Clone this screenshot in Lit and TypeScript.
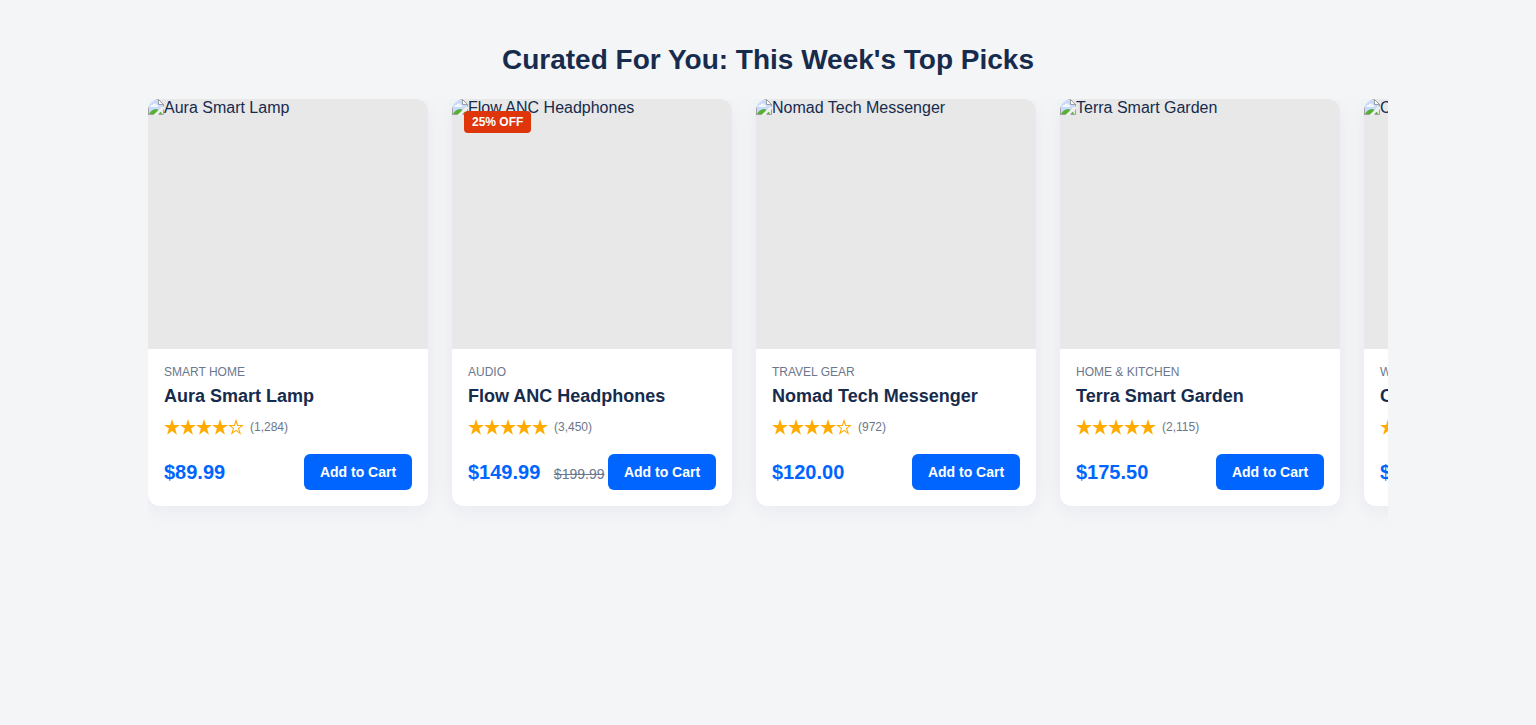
import { LitElement, html, css, svg, nothing } from "lit";
import { customElement, property } from "lit/decorators.js";

interface Product {
  name: string;
  category: string;
  stars: number;
  reviews: string;
  price: string;
  oldPrice?: string;
  badge?: string;
}

const PRODUCTS: Product[] = [
  { name: "Aura Smart Lamp", category: "Smart Home", stars: 4, reviews: "1,284", price: "$89.99" },
  { name: "Flow ANC Headphones", category: "Audio", stars: 5, reviews: "3,450", price: "$149.99", oldPrice: "$199.99", badge: "25% OFF" },
  { name: "Nomad Tech Messenger", category: "Travel Gear", stars: 4, reviews: "972", price: "$120.00" },
  { name: "Terra Smart Garden", category: "Home & Kitchen", stars: 5, reviews: "2,115", price: "$175.50" },
  { name: "Chrono Watch", category: "Wearables", stars: 4, reviews: "1,020", price: "$249.00" },
];

@customElement("product-card")
export class ProductCard extends LitElement {
  @property({ attribute: false }) product!: Product;

  static styles = css`
    :host {
      display: block;
      flex: 0 0 280px;
      height: 407px;
      box-sizing: border-box;
      border-radius: 12px;
      background: #fff;
      box-shadow: 0 4px 20px rgba(9, 30, 66, 0.055);
    }
    .media {
      position: relative;
      height: 250px;
      background: #e8e8e8;
      border-radius: 12px 12px 0 0;
      overflow: hidden;
    }
    .fallback {
      display: flex;
      align-items: flex-start;
      line-height: 18px;
      white-space: nowrap;
    }
    .broken { flex: none; width: 16px; height: 16px; }
    .badge {
      position: absolute;
      top: 12px;
      left: 12px;
      box-sizing: border-box;
      height: 22px;
      padding: 0 8px;
      border-radius: 4px;
      background: #de350b;
      color: #fff;
      font-size: 12px;
      line-height: 22px;
      font-weight: 700;
    }
    .info { padding: 16px; }
    .category {
      font-size: 12px;
      line-height: 14px;
      color: #6b778c;
      text-transform: uppercase;
      white-space: nowrap;
    }
    .name {
      margin: 5px 0 0;
      font-size: 18px;
      line-height: 25px;
      font-weight: 700;
      white-space: nowrap;
    }
    .rating {
      display: flex;
      align-items: center;
      height: 18px;
      margin-top: 9px;
    }
    .stars { display: flex; }
    .star { width: 16px; height: 16px; fill: #ffab00; }
    .hollow { fill: none; stroke: #ffab00; stroke-width: 1.05; }
    .count { margin-left: 6px; font-size: 12px; color: #6b778c; }
    .buy {
      display: flex;
      align-items: center;
      justify-content: space-between;
      height: 36px;
      margin-top: 18px;
      white-space: nowrap;
    }
    .price { font-size: 20px; font-weight: 700; color: #0065ff; }
    .old {
      margin-left: 8px;
      font-size: 14px;
      font-weight: 400;
      color: #6b778c;
      text-decoration: line-through;
    }
    .add {
      flex: none;
      width: 108px;
      height: 36px;
      padding: 0;
      border: 0;
      border-radius: 6px;
      background: #0065ff;
      color: #fff;
      font: 700 14px "Liberation Sans", Arial, sans-serif;
    }
  `;

  private star(filled: boolean) {
    return html`<svg class="star" viewBox="0 0 16 16">
      ${filled
        ? svg`<polygon points="8,0 9.9,5.9 15.9,5.9 11.1,9.6 12.9,15.7 8,12 3.1,15.7 4.9,9.6 0.1,5.9 6.1,5.9"></polygon>`
        : svg`<polygon class="hollow" points="8,1.5 9.6,6.4 14.6,6.4 10.5,9.4 12.1,14.4 8,11.4 3.9,14.4 5.5,9.4 1.4,6.4 6.4,6.4"></polygon>`}
    </svg>`;
  }

  render() {
    const p = this.product;
    return html`
      <div class="media">
        <div class="fallback">
          <svg class="broken" viewBox="0 0 16 16">
            <path d="M0 0H10.5L16 5.5V8L8 16H0Z" fill="#c8dbfa"></path>
            <path d="M2.5 8C2.3 6.4 3.6 5.6 4.8 5.9C5.3 4.1 8 4 8.5 5.9C10 5.7 10.6 7 10.2 8Z" fill="#f6f9ff"></path>
            <path d="M1 15C2.4 12 5.4 9.8 8 9.9C10.6 10 13 12 14 15Z" fill="#55b135"></path>
            <path d="M16 7V9.5L9.5 16H5.5L13 8.5Z" fill="#f0f0f0"></path>
            <path d="M0.5 16V0.5H10.5M0 15.5H6M10.5 15.5H15.5V10.5" fill="none" stroke="#a0a0a0"></path>
            <path d="M10.5 0.5V5.5H15.5Z" fill="#f8f8f8" stroke="#a0a0a0" stroke-linejoin="round"></path>
            <path d="M15.5 5V7.5" stroke="#a0a0a0"></path>
          </svg>
          <span>${p.name}</span>
        </div>
        ${p.badge ? html`<span class="badge">${p.badge}</span>` : nothing}
      </div>
      <div class="info">
        <div class="category">${p.category}</div>
        <h3 class="name">${p.name}</h3>
        <div class="rating">
          <span class="stars">${[1, 2, 3, 4, 5].map((n) => this.star(n <= p.stars))}</span>
          <span class="count">(${p.reviews})</span>
        </div>
        <div class="buy">
          <span class="price">${p.price} ${p.oldPrice ? html`<span class="old">${p.oldPrice}</span>` : nothing}</span>
          <button class="add">Add to Cart</button>
        </div>
      </div>
    `;
  }
}

@customElement("app-root")
export class AppRoot extends LitElement {
  static styles = css`
    :host {
      display: block;
      box-sizing: border-box;
      min-height: 725px;
      padding: 40px 0;
      background: #f4f5f7;
      color: #172b4d;
      font: 16px "Liberation Sans", Arial, sans-serif;
    }
    .section { width: 1240px; margin: 0 auto; }
    .title {
      margin: 0 0 20px;
      font-size: 28px;
      line-height: 39px;
      font-weight: 700;
      text-align: center;
    }
    .track {
      display: flex;
      gap: 24px;
      padding-bottom: 20px;
      overflow: hidden;
    }
  `;

  render() {
    return html`
      <section class="section">
        <h2 class="title">Curated For You: This Week's Top Picks</h2>
        <div class="track">
          ${PRODUCTS.map((p) => html`<product-card .product=${p}></product-card>`)}
        </div>
      </section>
    `;
  }
}
